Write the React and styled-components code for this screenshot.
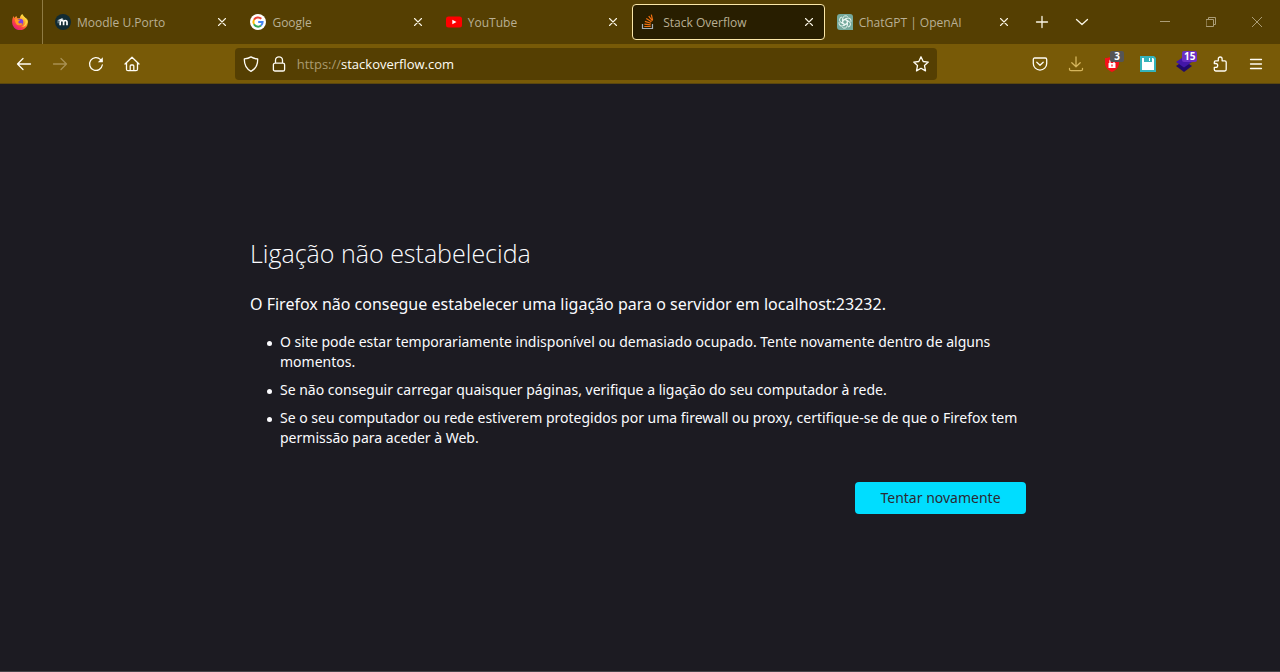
import React from "react";
import styled, { createGlobalStyle } from "styled-components";

const GlobalStyle = createGlobalStyle`
  *, *::before, *::after { box-sizing: border-box; }
  body {
    margin: 0;
    background: #1c1b22;
    font-family: "Open Sans", "Noto Sans", sans-serif;
  }
  button, input { font: inherit; color: inherit; }
  button { background: none; border: 0; padding: 0; }
`;

const Window = styled.div`
  min-height: 100vh;
  display: flex;
  flex-direction: column;
  background: #1c1b22;
  border-bottom: 1px solid #45444b;
`;

const TabStrip = styled.header`
  display: flex;
  align-items: center;
  height: 44px;
  background: #553f02;
  color: #fbf6e6;
`;

const ViewButton = styled.button`
  width: 43px;
  height: 44px;
  display: grid;
  place-items: center;
  padding-right: 2px;
  border-right: 1px solid #8f7b43;
`;

const TabList = styled.div`
  flex: 1;
  min-width: 0;
  display: flex;
  gap: 3px;
  padding: 0 6px 0 3px;
`;

const Tab = styled.div`
  flex: 1 1 0;
  min-width: 0;
  height: 36px;
  display: flex;
  align-items: center;
  padding: 0 7px 0 8px;
  border: 1px solid ${(p) => (p.$active ? "#fbe7a8" : "transparent")};
  border-radius: 4px;
  background: ${(p) => (p.$active ? "#281e00" : "transparent")};
`;

const TabLabel = styled.button`
  flex: 1;
  min-width: 0;
  display: flex;
  align-items: center;
  gap: 6px;
  font-size: 12px;
  line-height: 16px;
  color: #b9af94;
  white-space: nowrap;
  text-align: left;
  svg { flex: none; }
`;

const TabTitle = styled.span`
  padding-top: 2px;
`;

const TabClose = styled.button`
  width: 16px;
  height: 16px;
  display: grid;
  place-items: center;
`;

const StripButton = styled.button`
  width: 32px;
  height: 32px;
  margin-right: 8px;
  display: grid;
  place-items: center;
`;

const WindowControls = styled.div`
  display: flex;
  margin-left: 36px;
  color: #ab9d77;
`;

const WindowButton = styled.button`
  width: 46px;
  height: 44px;
  display: grid;
  place-items: center;
`;

const Toolbar = styled.nav`
  display: flex;
  align-items: center;
  height: 40px;
  padding: 0 6px;
  background: #785a07;
  border-bottom: 1px solid #5b470f;
  color: #fffdf5;
`;

const ToolButton = styled.button`
  flex: none;
  width: 36px;
  height: 36px;
  display: grid;
  place-items: center;
  position: relative;
  color: ${(p) => p.$color || "inherit"};
`;

const Badge = styled.span`
  position: absolute;
  top: 5px;
  left: 16px;
  min-width: 14px;
  height: 11px;
  padding: 0 2px;
  border-radius: 2px;
  background: ${(p) => p.$color};
  color: #fff;
  font-size: 10px;
  font-weight: 700;
  line-height: 11px;
  text-align: center;
`;

const Spacer = styled.div`
  flex: 4 1 0;
`;

const UrlBar = styled.form`
  flex: 33 1 0;
  min-width: 0;
  height: 32px;
  display: flex;
  align-items: center;
  padding: 0 2px;
  border-radius: 4px;
  background: #553f02;
`;

const UrlButton = styled.button`
  flex: none;
  width: 28px;
  height: 28px;
  display: grid;
  place-items: center;
`;

const Scheme = styled.label`
  margin-left: 4px;
  padding-top: 1px;
  font-size: 13px;
  line-height: 20px;
  color: #aa9b70;
`;

const UrlInput = styled.input`
  flex: 1;
  min-width: 0;
  padding: 1px 0 0;
  border: 0;
  outline: 0;
  background: none;
  font-size: 13px;
  line-height: 20px;
  color: #fffdf5;
`;

const Page = styled.main`
  flex: 1;
  display: flex;
  flex-direction: column;
  justify-content: center;
  align-items: center;
  padding-bottom: 2px;
  color: #fbfbfe;
  font-family: "Noto Sans", "Open Sans", sans-serif;
`;

const ErrorCard = styled.section`
  width: 100%;
  max-width: 780px;
`;

const Title = styled.h1`
  margin: 0;
  font-family: "Open Sans", "Noto Sans", sans-serif;
  font-size: 25px;
  font-weight: 300;
  line-height: 34px;
`;

const Lead = styled.p`
  margin: 22px 0 0;
  font-size: 16px;
  line-height: 24px;
`;

const Tips = styled.ul`
  margin: 16px 0 0;
  padding: 0 0 0 17px;
  list-style: none;
  font-size: 14px;
  line-height: 20px;
`;

const Tip = styled.li`
  display: flex;
  gap: 8px;
  margin-bottom: 8px;

  &::before {
    content: "";
    flex: none;
    width: 5px;
    height: 5px;
    margin-top: 9px;
    border-radius: 50%;
    background: currentColor;
  }
`;

const Actions = styled.div`
  display: flex;
  justify-content: flex-end;
  padding: 26px 4px 4px;
`;

const RetryButton = styled.button`
  min-width: 171px;
  height: 32px;
  padding: 0 23px;
  border-radius: 4px;
  background: #00ddff;
  color: #2b2a33;
  font-size: 14px;
  line-height: 20px;
`;

const Icon = ({ size = 16, width = 1.3, children }) => (
  <svg
    width={size}
    height={size}
    viewBox={`0 0 ${size} ${size}`}
    fill="none"
    stroke="currentColor"
    strokeWidth={width}
    strokeLinecap="round"
    strokeLinejoin="round"
    aria-hidden="true"
  >
    {children}
  </svg>
);

const FirefoxIcon = () => (
  <svg width="16" height="16" viewBox="0 0 16 16" aria-hidden="true">
    <defs>
      <linearGradient id="fox" x1="0.85" y1="0.1" x2="0.2" y2="0.95">
        <stop offset="0" stopColor="#fff44f" />
        <stop offset="0.35" stopColor="#ffa12b" />
        <stop offset="0.65" stopColor="#ff4a3a" />
        <stop offset="1" stopColor="#e21587" />
      </linearGradient>
    </defs>
    <path
      fill="url(#fox)"
      d="M15.7 6.5c-.3-.9-1-2-1.7-2.500.5.900.8 1.800.9 2.500C13.900 4 12 3.200 10.700.9c-.3-.4-.3-.7-.3-.9C8.300 1.200 7.900 3.400 7.900 4.300L5.500 4.200C4.900 3.700 4.500 2.900 4.500 2c-1 .5-1.800 1.300-2.300 2C1.900 3.500 1.900 2.500 2 2.100 1 2.900.1 4.800.1 8a7.900 7.900 0 0 0 15.800.6c.1-.7 0-1.500-.2-2.100z"
    />
    <circle cx="8" cy="8" r="3.300" fill="#7a3fe0" />
    <path fill="#ff9b22" d="M2.900 5.500c1.400-.7 2.800-.5 3.500.2l1.800.1c0 .7-1.700 1.200-1.800 1.900-.2 1 .6 2 2 1.600 1.200-.3 2-.1 2.100.4-1 2-4.700 2.300-6.200.2-.8-1-1.400-2.900-1.400-4.400z" />
    <path fill="#ffd83c" d="M10.400 0c-.1 3 3.200 4 3.300 7.200 0 3-2 5.200-4.600 5.700 3.800.2 6.400-2.500 6.200-5.900-.2-3-3.900-4-4.900-7z" />
  </svg>
);

const MoodleIcon = () => (
  <svg width="16" height="16" viewBox="0 0 16 16" aria-hidden="true">
    <circle cx="8" cy="8" r="8" fill="#122b33" />
    <path d="M5.200 11.200V8.200a1.700 1.700 0 0 1 3.400 0v3M8.600 11.200V8.200a1.700 1.700 0 0 1 3.400 0v3" fill="none" stroke="#fff" strokeWidth="1.700" />
    <path d="M2.500 6.300 7 4.300l1.700.9-4.200 1.900z" fill="#e8eef0" />
    <path d="M3.100 6.500v2.800" stroke="#a9bcc1" strokeWidth=".8" />
  </svg>
);

const GoogleIcon = () => (
  <svg width="16" height="16" viewBox="0 0 16 16" fill="none" strokeWidth="2" aria-hidden="true">
    <circle cx="8" cy="8" r="8" fill="#fff" />
    <path d="M4 5.700A4.600 4.600 0 0 1 11.300 4.800" stroke="#ea4335" />
    <path d="M4 5.700a4.600 4.600 0 0 0 0 4.600" stroke="#fbbc05" />
    <path d="M4 10.300a4.600 4.600 0 0 0 7 1.200" stroke="#34a853" />
    <path d="M8.200 8h4.400c0 1.500-.6 2.700-1.600 3.500" stroke="#4285f4" />
  </svg>
);

const YouTubeIcon = () => (
  <svg width="16" height="16" viewBox="0 0 16 16" aria-hidden="true">
    <rect y="2.500" width="16" height="11" rx="2.500" fill="#f00" />
    <path d="M6.300 5.700v4.600L10.500 8z" fill="#fff" />
  </svg>
);

const StackOverflowIcon = () => (
  <svg width="16" height="16" viewBox="0 0 16 16" fill="none" aria-hidden="true">
    <path d="M1.500 10v4.500h10V10" stroke="#a5adb5" strokeWidth="1.200" />
    <path d="M3.300 12.500h6.400M3.400 10.100l6.300.7M3.900 7.400l6 1.900M5.300 4.500l5.200 3.300M7.700 2.200l3.800 4.700M10.300.7l1.300 5.500" stroke="#f07010" strokeWidth="1.200" />
  </svg>
);

const ChatGptIcon = () => (
  <svg width="16" height="16" viewBox="0 0 16 16" fill="none" aria-hidden="true">
    <path d="M3 0h10a3 3 0 0 1 3 3v13H3a3 3 0 0 1-3-3V3a3 3 0 0 1 3-3z" fill="#75a99c" />
    <g stroke="#eaf6f2" strokeWidth=".8" transform="translate(8 8) scale(1.150) translate(-8 -8)">
      {[0, 60, 120, 180, 240, 300].map((angle) => (
        <path key={angle} transform={`rotate(${angle} 8 8)`} d="M6 9.200V5.100a2.500 2.500 0 0 1 4.400-1.600M6 6.900l2.100-1.200 3.500 2" />
      ))}
    </g>
  </svg>
);

const CloseIcon = () => (
  <Icon size={10} width={1.1}><path d="m1.500 1.500 7 7M8.500 1.500l-7 7" /></Icon>
);

const BlockerIcon = () => (
  <svg width="18" height="18" viewBox="0 0 18 18" aria-hidden="true">
    <path d="M9 1c2 1.500 4.500 2 7 2v5c0 4.500-3 7-7 9-4-2-7-4.500-7-9V3c2.500 0 5-.5 7-2z" fill="#f5101a" />
    <path d="M5.500 8h7v5h-7z" fill="#fff" />
    <path d="M7 8V6.500a2 2 0 0 1 4 0V8" fill="none" stroke="#fff" strokeWidth="1.300" />
    <path d="M8.400 9.500h1.200v2H8.400z" fill="#f5101a" />
  </svg>
);

const FloppyIcon = () => (
  <svg width="16" height="16" viewBox="0 0 16 16" aria-hidden="true">
    <path d="M0 0h14l2 2v14H0z" fill="#35b3ba" />
    <path d="M2 2h2v4h8V2h1l1 1v11H2z" fill="#fff" />
    <path d="M9 2h1v3H9z" fill="#fff" />
  </svg>
);

const LayersIcon = () => (
  <svg width="16" height="16" viewBox="0 0 16 16" aria-hidden="true">
    <path d="m0 10 3-2h10l3 2-8 6z" fill="#22096b" />
    <path d="m0 6 8-5.500L16 6l-8 5.500z" fill="#4317a8" />
  </svg>
);

const tabs = [
  { title: "Moodle U.Porto", icon: <MoodleIcon /> },
  { title: "Google", icon: <GoogleIcon /> },
  { title: "YouTube", icon: <YouTubeIcon /> },
  { title: "Stack Overflow", icon: <StackOverflowIcon />, active: true },
  { title: "ChatGPT | OpenAI", icon: <ChatGptIcon /> },
];

const tips = [
  "O site pode estar temporariamente indisponível ou demasiado ocupado. Tente novamente dentro de alguns momentos.",
  "Se não conseguir carregar quaisquer páginas, verifique a ligação do seu computador à rede.",
  "Se o seu computador ou rede estiverem protegidos por uma firewall ou proxy, certifique-se de que o Firefox tem permissão para aceder à Web.",
];

export default function App() {
  return (
    <Window>
      <GlobalStyle />
      <TabStrip>
        <ViewButton aria-label="Firefox View"><FirefoxIcon /></ViewButton>
        <TabList>
          {tabs.map((tab) => (
            <Tab key={tab.title} $active={tab.active}>
              <TabLabel aria-current={tab.active ? "page" : undefined}>
                {tab.icon}
                <TabTitle>{tab.title}</TabTitle>
              </TabLabel>
              <TabClose aria-label="Fechar separador"><CloseIcon /></TabClose>
            </Tab>
          ))}
        </TabList>
        <StripButton aria-label="Novo separador">
          <Icon><path d="M8 2.500v11M2.500 8h11" /></Icon>
        </StripButton>
        <StripButton aria-label="Listar separadores">
          <Icon><path d="m2.500 5.500 5.500 5 5.500-5" /></Icon>
        </StripButton>
        <WindowControls>
          <WindowButton aria-label="Minimizar">
            <Icon size={10} width={1}><path d="M0 4.500h10" /></Icon>
          </WindowButton>
          <WindowButton aria-label="Restaurar">
            <Icon size={10} width={1}><path d="M.5 2.500h7v7h-7zM2.500 2.500v-2h7v7h-2" /></Icon>
          </WindowButton>
          <WindowButton aria-label="Fechar">
            <Icon size={10} width={1}><path d="m0 0 10 10M10 0 0 10" /></Icon>
          </WindowButton>
        </WindowControls>
      </TabStrip>

      <Toolbar>
        <ToolButton aria-label="Retroceder">
          <Icon><path d="M14.500 8h-13M7 2.500 1.500 8 7 13.500" /></Icon>
        </ToolButton>
        <ToolButton aria-label="Avançar" $color="#a89052">
          <Icon><path d="M1.500 8h13M9 2.500 14.500 8 9 13.500" /></Icon>
        </ToolButton>
        <ToolButton aria-label="Recarregar">
          <Icon>
            <path d="M14.300 9A6.400 6.400 0 1 1 12.600 3.600L14 5" />
            <path d="M14.800 1.200v5H9.800z" fill="currentColor" stroke="none" />
          </Icon>
        </ToolButton>
        <ToolButton aria-label="Página inicial">
          <Icon><path d="M1 8 8 1.200 15 8M2.500 6.700v6.500c0 .8.600 1.500 1.500 1.500h8c.9 0 1.500-.7 1.500-1.500V6.700M6.200 14.500V10c0-.6.400-1 1-1h1.600c.6 0 1 .4 1 1v4.500" /></Icon>
        </ToolButton>
        <Spacer />
        <UrlBar>
          <UrlButton type="button" aria-label="Proteção">
            <Icon><path d="M8 .9c2 1.300 4.300 1.900 6.700 2 .1 5.500-1.700 10-6.700 12.400C3 12.900 1.200 8.400 1.300 2.900 3.700 2.800 6 2.200 8 .9z" /></Icon>
          </UrlButton>
          <UrlButton type="button" aria-label="Informação do site">
            <Icon><path d="M4.500 7V4.300a3.500 3.500 0 0 1 7 0V7M4 7.200h8c1 0 1.600.6 1.600 1.600v4.600c0 1-.6 1.600-1.600 1.600H4c-1 0-1.600-.6-1.600-1.600V8.800c0-1 .6-1.600 1.600-1.600z" /></Icon>
          </UrlButton>
          <Scheme htmlFor="url">https://</Scheme>
          <UrlInput id="url" defaultValue="stackoverflow.com" spellCheck={false} />
          <UrlButton type="button" aria-label="Adicionar marcador">
            <Icon><path d="m8 .8 2.200 4.700 5.100.6-3.800 3.500 1 5.300L8 12.300l-4.500 2.600 1-5.300L.7 6.100l5.100-.6z" /></Icon>
          </UrlButton>
        </UrlBar>
        <Spacer />
        <ToolButton aria-label="Pocket">
          <Icon><path d="M2.700 2h10.600c.8 0 1.400.6 1.400 1.400v4a6.700 6.700 0 0 1-13.400 0v-4C1.300 2.600 1.900 2 2.700 2zM4.800 6.200 8 9.200l3.200-3" /></Icon>
        </ToolButton>
        <ToolButton aria-label="Transferências" $color="#d5b55c">
          <Icon><path d="M8 1v9.500M3.800 6.700 8 10.700l4.200-4M1.500 12.500v.7c0 .9.600 1.500 1.500 1.500h10c.9 0 1.500-.6 1.500-1.500v-.7" /></Icon>
        </ToolButton>
        <ToolButton aria-label="Bloqueador">
          <BlockerIcon />
          <Badge $color="#555555">3</Badge>
        </ToolButton>
        <ToolButton aria-label="Guardar página"><FloppyIcon /></ToolButton>
        <ToolButton aria-label="Camadas">
          <LayersIcon />
          <Badge $color="#6a2fc2">15</Badge>
        </ToolButton>
        <ToolButton aria-label="Extensões">
          <Icon><path d="M2.300 7.500V6.200c0-.8.500-1.400 1.300-1.400h2.700V2.900a1.900 1.900 0 0 1 3.800 0v1.900h2.700c.8 0 1.400.6 1.400 1.400v7.400c0 .8-.6 1.400-1.400 1.400H3.700c-.8 0-1.400-.6-1.400-1.400v-2.300h1.500a1.900 1.900 0 0 0 0-3.800z" /></Icon>
        </ToolButton>
        <ToolButton aria-label="Menu">
          <Icon><path d="M2.500 3.500h11M2.500 8h11M2.500 12.500h11" /></Icon>
        </ToolButton>
      </Toolbar>

      <Page>
        <ErrorCard>
          <Title>Ligação não estabelecida</Title>
          <Lead>O Firefox não consegue estabelecer uma ligação para o servidor em localhost:23232.</Lead>
          <Tips>
            {tips.map((tip) => <Tip key={tip}>{tip}</Tip>)}
          </Tips>
          <Actions>
            <RetryButton>Tentar novamente</RetryButton>
          </Actions>
        </ErrorCard>
      </Page>
    </Window>
  );
}
